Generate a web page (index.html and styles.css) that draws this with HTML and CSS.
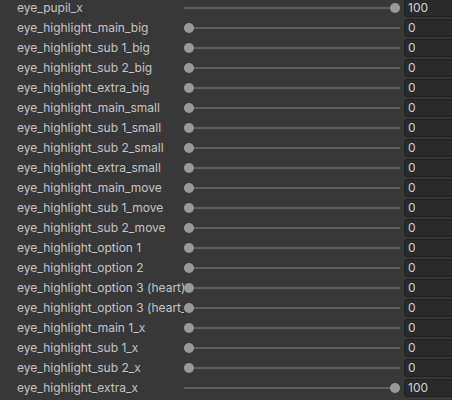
FILE: index.html
```html
<!DOCTYPE html>
<html>
<head>
<meta charset="utf-8">
<link rel="stylesheet" href="styles.css">
</head>
<body>
<div class="list">
  <div class="row"><div class="label">eye_pupil_x</div><div class="slider"><div class="track"></div><div class="knob" style="left:206px"></div></div><div class="field">100</div></div>
  <div class="row"><div class="label">eye_highlight_main_big</div><div class="slider"><div class="track"></div><div class="knob" style="left:0px"></div></div><div class="field">0</div></div>
  <div class="row"><div class="label">eye_highlight_sub 1_big</div><div class="slider"><div class="track"></div><div class="knob" style="left:0px"></div></div><div class="field">0</div></div>
  <div class="row"><div class="label">eye_highlight_sub 2_big</div><div class="slider"><div class="track"></div><div class="knob" style="left:0px"></div></div><div class="field">0</div></div>
  <div class="row"><div class="label">eye_highlight_extra_big</div><div class="slider"><div class="track"></div><div class="knob" style="left:0px"></div></div><div class="field">0</div></div>
  <div class="row"><div class="label">eye_highlight_main_small</div><div class="slider"><div class="track"></div><div class="knob" style="left:0px"></div></div><div class="field">0</div></div>
  <div class="row"><div class="label">eye_highlight_sub 1_small</div><div class="slider"><div class="track"></div><div class="knob" style="left:0px"></div></div><div class="field">0</div></div>
  <div class="row"><div class="label">eye_highlight_sub 2_small</div><div class="slider"><div class="track"></div><div class="knob" style="left:0px"></div></div><div class="field">0</div></div>
  <div class="row"><div class="label">eye_highlight_extra_small</div><div class="slider"><div class="track"></div><div class="knob" style="left:0px"></div></div><div class="field">0</div></div>
  <div class="row"><div class="label">eye_highlight_main_move</div><div class="slider"><div class="track"></div><div class="knob" style="left:0px"></div></div><div class="field">0</div></div>
  <div class="row"><div class="label">eye_highlight_sub 1_move</div><div class="slider"><div class="track"></div><div class="knob" style="left:0px"></div></div><div class="field">0</div></div>
  <div class="row"><div class="label">eye_highlight_sub 2_move</div><div class="slider"><div class="track"></div><div class="knob" style="left:0px"></div></div><div class="field">0</div></div>
  <div class="row"><div class="label">eye_highlight_option 1</div><div class="slider"><div class="track"></div><div class="knob" style="left:0px"></div></div><div class="field">0</div></div>
  <div class="row"><div class="label">eye_highlight_option 2</div><div class="slider"><div class="track"></div><div class="knob" style="left:0px"></div></div><div class="field">0</div></div>
  <div class="row"><div class="label">eye_highlight_option 3 (heart)</div><div class="slider"><div class="track"></div><div class="knob" style="left:0px"></div></div><div class="field">0</div></div>
  <div class="row"><div class="label">eye_highlight_option 3 (heart_2)</div><div class="slider"><div class="track"></div><div class="knob" style="left:0px"></div></div><div class="field">0</div></div>
  <div class="row"><div class="label">eye_highlight_main 1_x</div><div class="slider"><div class="track"></div><div class="knob" style="left:0px"></div></div><div class="field">0</div></div>
  <div class="row"><div class="label">eye_highlight_sub 1_x</div><div class="slider"><div class="track"></div><div class="knob" style="left:0px"></div></div><div class="field">0</div></div>
  <div class="row"><div class="label">eye_highlight_sub 2_x</div><div class="slider"><div class="track"></div><div class="knob" style="left:0px"></div></div><div class="field">0</div></div>
  <div class="row"><div class="label">eye_highlight_extra_x</div><div class="slider"><div class="track"></div><div class="knob" style="left:206px"></div></div><div class="field">100</div></div>
</div>
</body>
</html>
```
FILE: styles.css
```css
html, body {
  margin: 0;
  padding: 0;
  background: #383838;
  overflow: hidden;
  width: 452px;
  height: 400px;
}
.list {
  display: flex;
  flex-direction: column;
  margin-top: -2px;
  font-family: Inter, "Noto Sans", sans-serif;
  font-size: 12px;
  color: #c4c4c4;
}
.row {
  display: flex;
  align-items: center;
  height: 20px;
  padding-left: 17px;
}
.label {
  width: 167px;
  flex: none;
  white-space: nowrap;
  overflow: hidden;
  line-height: 20px;
}
.slider {
  position: relative;
  width: 216px;
  height: 20px;
  flex: none;
  display: flex;
  align-items: center;
}
.track {
  width: 100%;
  height: 2px;
  background: #5e5e5e;
}
.knob {
  position: absolute;
  top: 5px;
  width: 10px;
  height: 10px;
  border-radius: 50%;
  background: #999999;
}
.field {
  flex: none;
  margin-left: 4px;
  width: 56px;
  height: 18px;
  box-sizing: border-box;
  background: #2a2a2a;
  border: 1px solid #212121;
  border-radius: 3px;
  color: #d2d2d2;
  line-height: 16px;
  padding-left: 3px;
}
```
